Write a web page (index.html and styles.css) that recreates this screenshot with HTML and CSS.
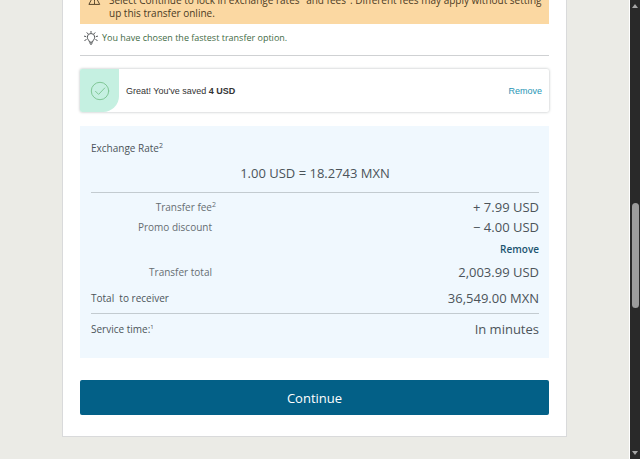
FILE: index.html
```html
<!DOCTYPE html>
<html lang="en">
<head>
<meta charset="utf-8">
<meta name="viewport" content="width=device-width, initial-scale=1">
<title>Send money</title>
<link rel="stylesheet" href="styles.css">
</head>
<body>
<div class="window">
  <main class="page">
    <section class="card">
      <div class="alert">
        <svg class="alert-icon" viewBox="0 0 14 14" aria-hidden="true"><path d="M7 1.5 12.6 12.3H1.4Z"/><path d="M7 5.5v3.6M7 10.2v1.2"/></svg>
        <p>Select Continue to lock in exchange rates<sup>2</sup> and fees<sup>2</sup>. Different fees may apply without setting up this transfer online.</p>
      </div>
      <p class="tip">
        <svg class="tip-icon" viewBox="0 0 14 14" aria-hidden="true"><path d="M5.5 10.7C5.5 9.4 3.3 8.700 3.300 6.200a3.700 3.700 0 0 1 7.400 0c0 2.500-2.200 3.200-2.200 4.500Z"/><path d="M5.700 12h2.600M6.500 13.200h1M7 .2v1.300M3 1.700l.9 1M11 1.700l-.9 1M.4 5.200l1.400.3M13.600 5.200l-1.400.3M.8 9.400l1.400-.7M13.200 9.400l-1.400-.7"/></svg>
        <span>You have chosen the fastest transfer option.</span>
      </p>
      <div class="promo">
        <span class="promo-badge"><svg class="check-icon" viewBox="0 0 20 20" aria-hidden="true"><circle cx="10" cy="10" r="8.700"/><path d="m5.500 10.300 3.100 3.100L14.700 7"/></svg></span>
        <p>Great! You've saved <strong>4 USD</strong></p>
        <a class="promo-remove" href="#">Remove</a>
      </div>
      <div class="summary">
        <h2 class="rate-title">Exchange Rate<sup>2</sup></h2>
        <p class="rate">1.00 USD = 18.2743 MXN</p>
        <dl class="rows">
          <div class="row"><dt class="indent">Transfer fee<sup class="hang">2</sup></dt><dd>+ 7.99 USD</dd></div>
          <div class="row"><dt class="indent">Promo discount</dt><dd>− 4.00 USD<a class="discount-remove" href="#">Remove</a></dd></div>
          <div class="row total"><dt class="indent">Transfer total</dt><dd>2,003.99 USD</dd></div>
          <div class="row receiver"><dt>Total&nbsp; to receiver</dt><dd>36,549.00 MXN</dd></div>
          <div class="row service"><dt>Service time:<sup class="small">1</sup></dt><dd>In minutes</dd></div>
        </dl>
      </div>
      <button class="continue" type="button">Continue</button>
    </section>
  </main>
  <div class="scrollbar" aria-hidden="true">
    <svg class="arrow" viewBox="0 0 6 4"><path d="M3 0 6 4H0Z"/></svg>
    <span class="track"><span class="thumb"></span></span>
    <svg class="arrow" viewBox="0 0 6 4"><path d="M0 0h6L3 4Z"/></svg>
  </div>
</div>
</body>
</html>
```
FILE: styles.css
```css
* {
  box-sizing: border-box;
}

body,
p,
h2,
dl,
dd {
  margin: 0;
}

body {
  background: #ebebe6;
  color: #4c545a;
  font-family: "Open Sans", "Noto Sans", sans-serif;
  font-size: 10px;
  line-height: 20px;
}

a {
  text-decoration: none;
}

svg {
  display: block;
  flex: none;
  fill: none;
  stroke-linecap: round;
  stroke-linejoin: round;
}

sup {
  font-size: 7px;
  line-height: 0;
}

.window {
  display: flex;
  height: 100vh;
  overflow: hidden;
}

.page {
  flex: 1;
  min-width: 0;
  padding: 0 62px;
}

.card {
  padding: 0 17px 21px;
  background: #fff;
  border: 1px solid #d9dadb;
  border-top: 0;
}

.alert {
  display: flex;
  align-items: flex-end;
  gap: 8px;
  height: 24px;
  padding: 0 0 4px 8px;
  overflow: hidden;
  background: #fbd8a2;
  color: #4b3b24;
  line-height: 13px;
}

.alert-icon {
  width: 13px;
  height: 13px;
  margin-bottom: 14px;
  stroke: #4b3b24;
}

.tip {
  display: flex;
  align-items: center;
  gap: 4px;
  padding: 4px 4px 7px;
  border-bottom: 1px solid #cfd1d3;
  color: #3f6b45;
  font-size: 9px;
}

.tip-icon {
  width: 14px;
  height: 14px;
  stroke: #55585a;
}

.promo {
  display: flex;
  align-items: center;
  gap: 7px;
  height: 43px;
  margin: 13px 0 14px;
  padding-right: 7px;
  background: #fff;
  border-radius: 2px;
  box-shadow: 0 0 3px #b5b9bb;
  color: #333;
  font-family: "Liberation Sans", Arial, sans-serif;
  font-size: 9px;
}

.promo p {
  flex: 1;
}

.promo-badge {
  display: grid;
  place-items: center;
  width: 39px;
  height: 100%;
  background: #c5f0e1;
  border-radius: 2px 0 16px 2px;
}

.check-icon {
  width: 20px;
  height: 20px;
  stroke: #80c796;
}

.promo-remove {
  color: #2795b5;
}

.summary {
  padding: 12px 10px 19px 11px;
  background: #f0f8fe;
}

.rate-title {
  font-size: 10px;
  font-weight: 400;
}

.rate {
  padding: 5px 0 9px;
  border-bottom: 1px solid #c3cbd0;
  font-size: 13px;
  text-align: center;
}

.rows {
  padding-top: 4px;
}

.row {
  display: flex;
  justify-content: space-between;
}

.row dd {
  font-size: 13px;
  text-align: right;
}

.indent {
  width: 121px;
  color: #666d72;
  text-align: right;
}

.hang {
  margin-right: -4px;
}

.small {
  font-size: 6px;
}

.discount-remove {
  display: block;
  padding-top: 2px;
  color: #1b5470;
  font-size: 10px;
  font-weight: 600;
}

.total {
  padding: 3px 0;
}

.receiver {
  padding: 3px 0 5px;
  border-bottom: 1px solid #c3cbd0;
}

.service {
  padding-top: 5px;
}

.continue {
  display: block;
  width: 100%;
  height: 35px;
  margin-top: 22px;
  padding: 0;
  background: #036087;
  border: 0;
  border-radius: 2px;
  color: #fff;
  font: 13px/20px "Open Sans", "Noto Sans", sans-serif;
}

.scrollbar {
  display: flex;
  flex-direction: column;
  align-items: center;
  width: 11px;
  padding: 4px 0;
  background: #292929;
  border-left: 1px solid #fff;
}

.arrow {
  width: 6px;
  height: 4px;
  fill: #a6a6a6;
}

.track {
  flex: 1;
  padding-top: 42vh;
}

.thumb {
  display: block;
  width: 7px;
  height: 23vh;
  margin-top: 2px;
  background: #9c9c9c;
  border-radius: 4px;
}
```
